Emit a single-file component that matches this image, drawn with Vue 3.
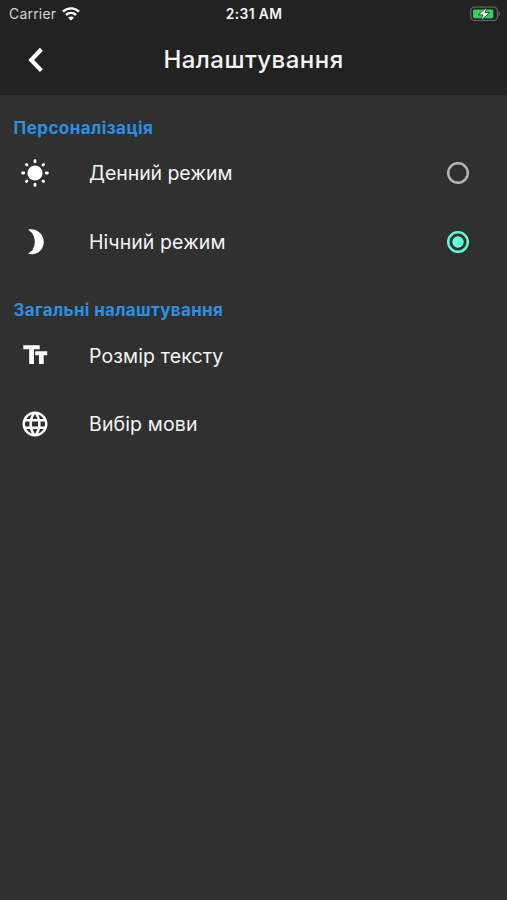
<script setup>
import { ref } from 'vue'

const mode = ref('night')
const modes = [
  { id: 'day', label: 'Денний режим' },
  { id: 'night', label: 'Нічний режим' },
]
</script>

<template>
  <main class="screen">
    <header class="top">
      <div class="status">
        <div class="carrier">
          <span>Carrier</span>
          <svg class="wifi" viewBox="0 0 18 14" width="18" height="14">
            <path d="M1 4.7C5.6.3 12.4.3 17 4.7" />
            <path d="M4 8C6.9 5.3 11.1 5.3 14 8" />
            <path class="dot" d="M9 13.6 6.1 10.7C7.7 9.1 10.3 9.1 11.9 10.7Z" />
          </svg>
        </div>
        <span class="clock">2:31 AM</span>
        <svg class="battery" viewBox="0 0 31 16" width="31" height="16">
          <rect x=".8" y="1.2" width="26.6" height="13.2" rx="3.6" fill="none" stroke="#626262" stroke-width="1.2" />
          <path d="M28.6 5.2Q31.4 7.8 28.6 10.4Z" fill="#6c6c6c" />
          <rect x="3" y="3.4" width="20.3" height="8.8" rx="1.4" fill="#32d15b" />
          <path d="M16.6 1.3 8.3 8.9H12.7L11 14.4 19.6 6.7H15.1Z" fill="#fff" stroke="#222" stroke-width=".8" />
        </svg>
      </div>
      <div class="bar">
        <button class="back" aria-label="Назад">
          <svg viewBox="0 0 16 26" width="16" height="26"><path d="M13.4 2.3 3.2 13 13.4 23.6" /></svg>
        </button>
        <h1>Налаштування</h1>
      </div>
    </header>

    <section class="group personal">
      <h2>Персоналізація</h2>
      <label v-for="m in modes" :key="m.id" class="row" :class="m.id">
        <svg v-if="m.id === 'day'" class="icon" viewBox="0 0 30 30" width="30" height="30">
          <circle cx="15" cy="15" r="7.6" />
          <path class="rays" d="M15 2.6V3.8M15 26.2V27.4M2.6 15H3.8M26.2 15H27.4M6.4 6.4 7 7M23 23 23.6 23.6M6.4 23.6 7 23M23 7 23.6 6.4" />
        </svg>
        <svg v-else class="icon" viewBox="0 0 30 30" width="30" height="30">
          <path d="M8 2.8C16 .6 23.8 6.8 23.8 15C23.8 23.4 16 29.2 8 26.6C12.6 24.4 14.8 19.8 14.8 14.8C14.8 9.8 12.6 5.2 8 2.8Z" />
        </svg>
        <span>{{ m.label }}</span>
        <input v-model="mode" type="radio" name="mode" :value="m.id" />
      </label>
    </section>

    <section class="group general">
      <h2>Загальні налаштування</h2>
      <div class="row size">
        <svg class="icon" viewBox="0 0 30 30" width="30" height="30">
          <path d="M3.3 4.3H19.7V8.3H14V23H9.2V8.3H3.3ZM15.2 10.3H27.2V14.3H23.7V23H19V14.3H15.2Z" />
        </svg>
        <span>Розмір тексту</span>
      </div>
      <div class="row lang">
        <svg class="icon" viewBox="0 0 24 24" width="30" height="30">
          <path d="M11.99 2C6.47 2 2 6.48 2 12s4.47 10 9.99 10C17.52 22 22 17.52 22 12S17.52 2 11.99 2zm6.93 6h-2.95c-.32-1.25-.78-2.45-1.38-3.56 1.84.63 3.37 1.91 4.33 3.56zM12 4.04c.83 1.2 1.48 2.53 1.91 3.96h-3.82c.43-1.43 1.08-2.76 1.91-3.96zM4.26 14C4.1 13.36 4 12.69 4 12s.1-1.36.26-2h3.38c-.08.66-.14 1.32-.14 2s.06 1.34.14 2H4.26zm.82 2h2.95c.32 1.25.78 2.45 1.38 3.56-1.84-.63-3.37-1.9-4.33-3.56zm2.95-8H5.08c.96-1.66 2.49-2.93 4.33-3.56C8.81 5.55 8.35 6.75 8.03 8zM12 19.96c-.83-1.2-1.48-2.53-1.91-3.96h3.82c-.43 1.43-1.08 2.76-1.91 3.96zM14.34 14H9.66c-.09-.66-.16-1.32-.16-2s.07-1.35.16-2h4.68c.09.65.16 1.32.16 2s-.07 1.34-.16 2zm.25 5.56c.6-1.11 1.06-2.31 1.38-3.56h2.95c-.96 1.65-2.49 2.93-4.33 3.56zM16.36 14c.08-.66.14-1.32.14-2s-.06-1.34-.14-2h3.38c.16.64.26 1.31.26 2s-.1 1.36-.26 2h-3.38z" />
        </svg>
        <span>Вибір мови</span>
      </div>
    </section>
  </main>
</template>

<style>
body { margin: 0; background: #303030; }
</style>

<style scoped>
.screen {
  box-sizing: border-box;
  width: 100%;
  height: 900px;
  background: #303030;
  border-bottom: 1px solid #382c34;
  color: #f4f4f4;
  font-family: Inter, "Liberation Sans", sans-serif;
  overflow: hidden;
}
.top { height: 95px; background: #222; }
.status {
  display: grid;
  grid-template-columns: 1fr auto 1fr;
  align-items: center;
  height: 27px;
  padding: 0 6px 0 9px;
  font-size: 14px;
}
.carrier { display: flex; align-items: center; gap: 5.5px; color: #d6d6d6; letter-spacing: .2px; }
.wifi { fill: none; stroke: #fff; stroke-width: 2.4; }
.wifi .dot { fill: #fff; stroke: none; }
.clock { font-weight: 600; font-size: 13.8px; letter-spacing: .4px; margin-right: 2px; }
.battery { justify-self: end; }
.bar {
  display: grid;
  grid-template-columns: 72px 1fr 72px;
  align-items: center;
  height: 66px;
}
.back { display: flex; margin: 0 0 0 28px; padding: 0; border: 0; background: none; }
.back svg { fill: none; stroke: #fff; stroke-width: 4.2; }
h1 { margin: 0; text-align: center; font-size: 24px; line-height: 30px; font-weight: 500; letter-spacing: .47px; }
h2 { margin: 0; padding-left: 13.5px; font-size: 17px; line-height: 22px; font-weight: 700; color: #2b90e2; letter-spacing: .45px; }
.group { display: flex; flex-direction: column; }
.personal { padding-top: 22px; }
.general { padding-top: 23px; }
.general h2 { letter-spacing: .33px; }
.row {
  display: grid;
  grid-template-columns: 69px 1fr auto;
  align-items: center;
  height: 68.4px;
  padding: 0 38px 0 20px;
  font-size: 19.5px;
  letter-spacing: .13px;
}
.day { letter-spacing: -.07px; }
.night { letter-spacing: .06px; }
.size, .lang { padding-top: 1px; margin-bottom: -1px; }
.icon { fill: #fff; }
.rays { fill: none; stroke: #fff; stroke-width: 2.8; stroke-linecap: round; }
input {
  appearance: none;
  box-sizing: border-box;
  width: 22px;
  height: 22px;
  margin: 0;
  border: 2px solid #b8b8b8;
  border-radius: 50%;
  box-shadow: inset 0 0 0 .5px #b8b8b8;
}
input:checked {
  border-color: #64ffda;
  box-shadow: inset 0 0 0 .5px #64ffda;
  background: radial-gradient(circle, #64ffda 5.3px, transparent 6px);
}
</style>
